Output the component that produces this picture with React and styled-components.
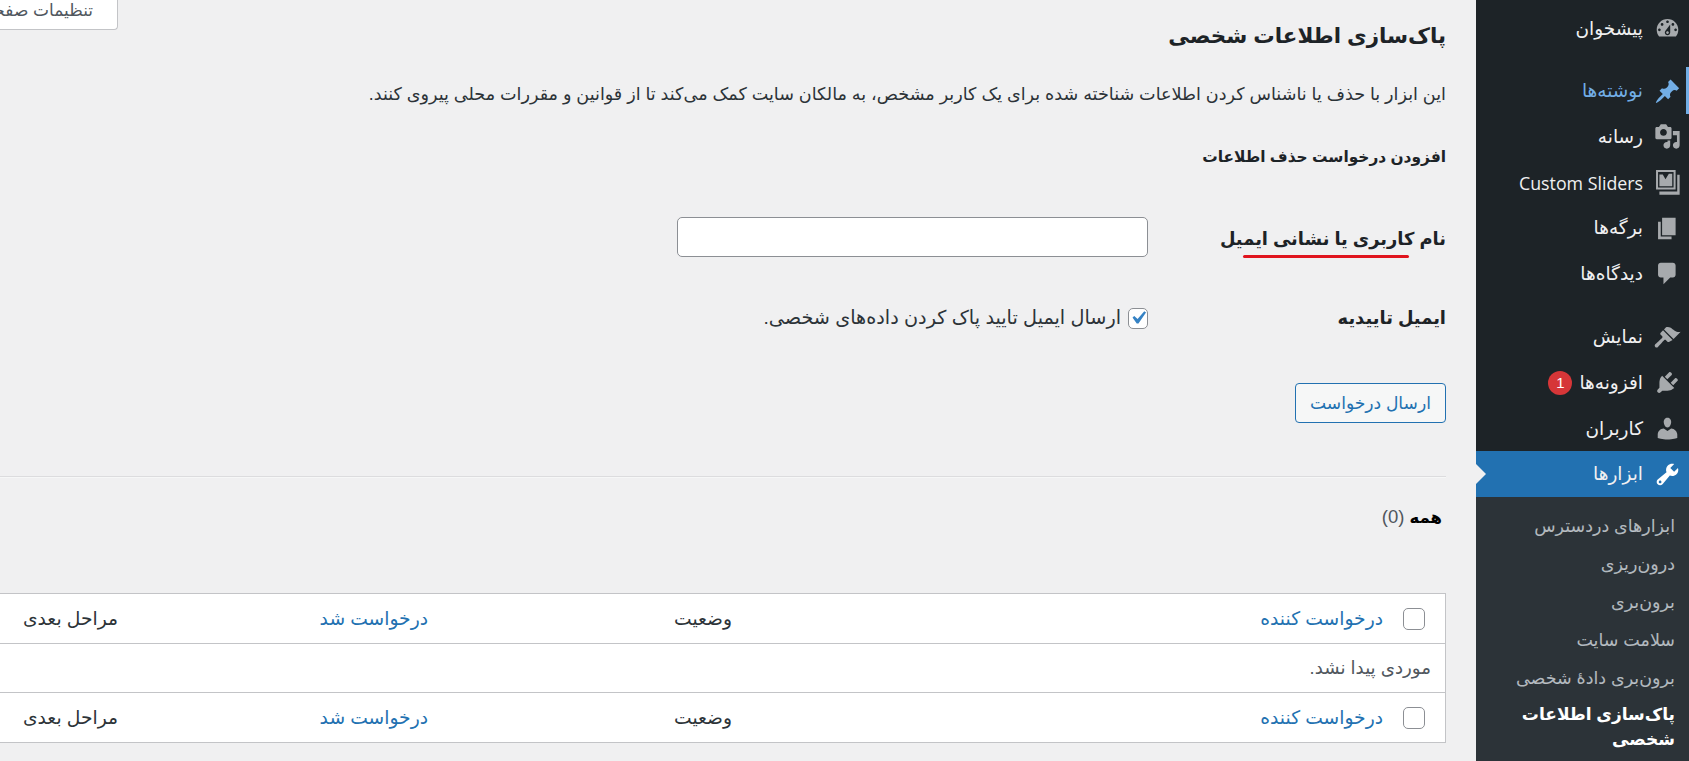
import React from "react";
import styled, { createGlobalStyle } from "styled-components";

const Global = createGlobalStyle`
  html, body { margin: 0; padding: 0; height: 100%; overflow: hidden; background: #f0f0f1; }
  body { font-family: "Liberation Sans", "DejaVu Sans", sans-serif; color: #2c3338; }
  #root { height: 100%; }
`;

const Page = styled.div`
  display: flex;
  direction: rtl;
  width: 1689px;
  height: 761px;
  overflow: hidden;
`;
const Sidebar = styled.nav`
  flex: 0 0 213px;
  background: #1d2327;
  padding-top: 6px;
  box-sizing: border-box;
  height: 761px;
`;
const MenuGroup = styled.ul`
  list-style: none;
  margin: 0 0 ${(p) => p.$gap || 0}px;
  padding: 0;
`;
const MenuItem = styled.li`
  position: relative;
  display: flex;
  align-items: center;
  gap: 11px;
  height: 45.6px;
  box-sizing: border-box;
  padding-right: 8px;
  font-size: 18.5px;
  color: ${(p) => (p.$current ? "#72aee6" : "#f0f0f1")};
  background: ${(p) => (p.$active ? "#2271b1" : "transparent")};
  svg { flex: 0 0 27px; fill: ${(p) => (p.$current ? "#72aee6" : p.$active ? "#fff" : "#a7aaad")}; }
`;
const CurrentBar = styled.span`
  position: absolute;
  right: 0;
  top: -2px;
  width: 3px;
  height: 47px;
  background: #72aee6;
`;
const LatinLabel = styled.span`
  font-family: "Open Sans", sans-serif;
  font-size: 17.8px;
`;
const Arrow = styled.span`
  position: absolute;
  left: 0;
  top: 13px;
  border-style: solid;
  border-width: 10px 0 10px 10px;
  border-color: transparent transparent transparent #f0f0f1;
`;
const Badge = styled.span`
  width: 24px;
  height: 24px;
  border-radius: 50%;
  background: #d63638;
  color: #fff;
  font-size: 15px;
  display: flex;
  align-items: center;
  justify-content: center;
  margin-right: -4px;
`;
const SubMenu = styled.ul`
  list-style: none;
  margin: 0;
  padding: 10px 14px 0 0;
  background: #2c3338;
  height: 264px;
  box-sizing: border-box;
`;
const SubItem = styled.li`
  min-height: 38px;
  line-height: ${(p) => (p.$current ? "25px" : "38px")};
  padding-top: ${(p) => (p.$current ? 5 : 0)}px;
  font-size: ${(p) => (p.$current ? 17 : 17.5)}px;
  font-weight: ${(p) => (p.$current ? 700 : 400)};
  color: ${(p) => (p.$current ? "#fff" : "rgba(240,246,252,.7)")};
  padding-left: 30px;
`;

const Main = styled.main`
  flex: 1 1 auto;
  min-width: 0;
  overflow: hidden;
  padding-right: 30px;
`;
const Inner = styled.div`
  width: 1486px;
`;
const Head = styled.header`
  display: flex;
  justify-content: space-between;
  align-items: center;
  height: 70px;
`;
const Title = styled.h1`
  margin: 2px 0 0;
  font-size: 21.4px;
  font-weight: 700;
  color: #1d2327;
`;
const ScreenButton = styled.button`
  align-self: flex-start;
  direction: rtl;
  width: 158px;
  height: 30px;
  padding: 0 24px 8px 0;
  text-align: right;
  font: inherit;
  font-size: 17px;
  color: #50575e;
  background: #fff;
  border: 1px solid #c3c4c7;
  border-top: 0;
  border-radius: 0 0 4px 4px;
  overflow: hidden;
  white-space: nowrap;
`;
const Intro = styled.p`
  margin: 12px 0 0;
  font-size: 17.6px;
  line-height: 24px;
  color: #2c3338;
`;
const SubTitle = styled.h2`
  margin: 39px 0 0;
  font-size: 15.4px;
  line-height: 24px;
  font-weight: 700;
  color: #1d2327;
`;
const FormRow = styled.div`
  display: grid;
  grid-template-columns: 298px 471px;
  align-items: center;
  margin-top: ${(p) => p.$top}px;
`;
const Label = styled.label`
  position: relative;
  padding-top: ${(p) => p.$nudge || 0}px;
  font-size: 17.9px;
  font-weight: 700;
  color: #1d2327;
  line-height: 24px;
`;
const RedLine = styled.span`
  position: absolute;
  right: 37px;
  width: 166px;
  top: 32px;
  height: 3px;
  background: #e0141e;
  border-radius: 2px;
`;
const TextInput = styled.input`
  width: 471px;
  height: 40px;
  box-sizing: border-box;
  background: #fff;
  border: 1px solid #8c8f94;
  border-radius: 5px;
`;
const CheckRow = styled.div`
  display: flex;
  align-items: center;
  gap: 7px;
  font-size: 19.2px;
  line-height: 24px;
  color: #2c3338;
`;
const CheckBox = styled.span`
  flex: 0 0 20px;
  width: 20px;
  height: 21px;
  box-sizing: border-box;
  display: flex;
  align-items: center;
  justify-content: center;
  background: #fff;
  border: 1px solid #8c8f94;
  border-radius: 5px;
  svg { flex: 0 0 auto; fill: #3582c4; }
`;
const Submit = styled.button`
  display: block;
  margin-top: 53px;
  width: 151px;
  height: 40px;
  font: inherit;
  font-size: 17.1px;
  color: #2271b1;
  background: #f6f7f7;
  border: 1px solid #2271b1;
  border-radius: 4px;
`;
const Rule = styled.hr`
  margin: 53px 0 0;
  border: 0;
  border-top: 1px solid #dcdcde;
  border-bottom: 1px solid #f6f7f7;
`;
const Filter = styled.div`
  margin: 27px 4px 0 0;
  line-height: 24px;
  font-size: 18.5px;
  color: #50575e;
  b { color: #000; font-size: 16.5px; }
`;
const Table = styled.table`
  width: 100%;
  margin-top: 64px;
  table-layout: fixed;
  border-collapse: separate;
  border-spacing: 0;
  background: #fff;
  border: 1px solid #c3c4c7;
  font-size: 18.7px;
  color: #2c3338;
`;
const Th = styled.th`
  font-weight: 400;
  text-align: right;
  padding: 0 13px 0 0;
  height: 49px;
  color: ${(p) => (p.$link ? "#2271b1" : "#2c3338")};
  ${(p) => p.$bottom && "border-bottom: 1px solid #c3c4c7;"}
  ${(p) => p.$topline && "border-top: 1px solid #c3c4c7;"}
`;
const CheckTh = styled(Th)`
  padding: 0 20px 0 0;
`;
const EmptyBox = styled.span`
  display: block;
  width: 22px;
  height: 22px;
  box-sizing: border-box;
  background: #fff;
  border: 1px solid #8c8f94;
  border-radius: 5px;
`;
const EmptyCell = styled.td`
  height: 48px;
  padding: 0 14px 0 0;
  font-size: 18.2px;
  color: #50575e;
`;

const Icon = ({ d, size = 27, rule = "nonzero" }) => (
  <svg width={size} height={size} viewBox="0 0 20 20" aria-hidden="true"><path d={d} fillRule={rule} /></svg>
);

const I = {
  dash: "M3.76 16h12.48c1.1-1.37 1.76-3.11 1.76-5 0-4.42-3.58-8-8-8s-8 3.58-8 8c0 1.89.66 3.63 1.76 5zM10 4c.55 0 1 .45 1 1s-.45 1-1 1-1-.45-1-1 .45-1 1-1zM6 6c.55 0 1 .45 1 1s-.45 1-1 1-1-.45-1-1 .45-1 1-1zm8 0c.55 0 1 .45 1 1s-.45 1-1 1-1-.45-1-1 .45-1 1-1zm-5.37 5.55L12 7v6c0 1.1-.9 2-2 2s-2-.9-2-2c0-.57.24-1.08.63-1.45zM4 10c.55 0 1 .45 1 1s-.45 1-1 1-1-.45-1-1 .45-1 1-1zm12 0c.55 0 1 .45 1 1s-.45 1-1 1-1-.45-1-1 .45-1 1-1zm-5 3c0-.55-.45-1-1-1s-1 .45-1 1 .45 1 1 1 1-.45 1-1z",
  post: "M10.44 3.02l1.82-1.82 6.36 6.35-1.83 1.82c-1.05-.68-2.48-.57-3.41.36l-.75.75c-.92.93-1.04 2.35-.35 3.41l-1.83 1.82-2.41-2.41-2.8 2.79c-.42.42-3.38 2.71-3.8 2.29s1.86-3.39 2.28-3.81l2.79-2.79L4.1 9.36l1.83-1.82c1.05.69 2.48.57 3.4-.36l.75-.75c.93-.92 1.05-2.35.36-3.41z",
  media: "M13 11V4c0-.55-.45-1-1-1h-1.67L9 1H5L3.67 3H2c-.55 0-1 .45-1 1v7c0 .55.45 1 1 1h10c.55 0 1-.45 1-1zM7 4.5c1.38 0 2.5 1.12 2.5 2.5S8.38 9.5 7 9.5 4.5 8.38 4.5 7 5.62 4.5 7 4.5zM14 6h5v10.5c0 1.38-1.12 2.5-2.5 2.5S14 17.88 14 16.5s1.12-2.5 2.5-2.5c.17 0 .34.02.5.05V9h-3V6zm-4 8.05V13h2v3.5c0 1.38-1.12 2.5-2.5 2.5S7 17.88 7 16.5 8.12 14 9.5 14c.17 0 .34.02.5.05z",
  slides: "M1.5.7H16v14.5H1.5zM3 2.2v11.5h11.5V2.2zM4 12.7V4h2.5L8.5 7.5 11 3.5h2.5v9.2zM17.2 4.2H19V19H4v-2.4h13.2z",
  page: "M6 15V2h10v13H6zm-1 1h8v2H3V5h2v11z",
  comment: "M5 2h9c1.1 0 2 .9 2 2v7c0 1.1-.9 2-2 2h-2l-5 5v-5H5c-1.1 0-2-.9-2-2V4c0-1.1.9-2 2-2z",
  brush: "M14.48 11.06L7.41 3.99l1.5-1.5c.5-.56 2.3-.47 3.51.32 1.21.8 1.43 1.28 2.91 2.1 1.18.64 2.45 1.26 4.45.85zm-.71.71L6.7 4.7 4.93 6.47c-.39.39-.39 1.02 0 1.41l1.06 1.06c.39.39.39 1.03 0 1.42-.6.6-5.06 4.62-5.06 4.62-.55.55-.55 1.45 0 2 .56.56 1.45.56 2 0 0 0 3.99-4.38 4.56-4.95.39-.39 1.04-.4 1.42-.01l1.06 1.06c.39.39 1.02.39 1.41 0z",
  plug: "M13.11 4.36L9.87 7.6 8 5.73l3.24-3.24c.35-.34 1.05-.2 1.56.32.52.51.66 1.21.31 1.55zm-8 1.77l.91-1.12 9.01 9.01-1.19.84c-.71.71-2.63 1.16-3.82 1.16H6.14L4.9 17.26c-.59.59-1.54.59-2.12 0-.59-.58-.59-1.53 0-2.12l1.24-1.24v-3.88c0-1.13.4-3.19 1.09-3.89zm7.26 3.97l3.24-3.24c.34-.35 1.04-.21 1.55.31.52.51.66 1.21.31 1.55l-3.24 3.25z",
  user: "M10 9.25c-2.27 0-2.73-3.44-2.73-3.44C7 4.02 7.82 2 9.97 2c2.16 0 2.98 2.02 2.71 3.81 0 0-.41 3.44-2.68 3.44zm0 2.57L12.72 10c2.39 0 4.52 2.33 4.52 4.53v2.49s-3.65 1.13-7.24 1.13c-3.65 0-7.24-1.13-7.24-1.13v-2.49c0-2.25 1.94-4.48 4.47-4.48z",
  tool: "M16.68 9.77c-1.34 1.34-3.3 1.67-4.95.99l-5.41 6.52c-.99.99-2.59.99-3.58 0s-.99-2.59 0-3.57l6.52-5.42c-.68-1.65-.35-3.61.99-4.95 1.28-1.28 3.12-1.62 4.72-1.06l-2.89 2.89 2.82 2.82 2.86-2.87c.53 1.58.18 3.39-1.08 4.65zM3.81 16.21c.4.39 1.04.39 1.43 0 .4-.4.4-1.04 0-1.43-.39-.4-1.03-.4-1.43 0-.39.39-.39 1.03 0 1.43z",
};

const Columns = () => (
  <colgroup>
    <col style={{ width: 49 }} />
    <col style={{ width: 651 }} />
    <col style={{ width: 304 }} />
    <col style={{ width: 310 }} />
    <col />
  </colgroup>
);

const HeaderCells = ({ bottom, topline }) => (
  <tr>
    <CheckTh $bottom={bottom} $topline={topline}><EmptyBox /></CheckTh>
    <Th $link $bottom={bottom} $topline={topline}>درخواست کننده</Th>
    <Th $bottom={bottom} $topline={topline}>وضعیت</Th>
    <Th $link $bottom={bottom} $topline={topline}>درخواست شد</Th>
    <Th $bottom={bottom} $topline={topline}>مراحل بعدی</Th>
  </tr>
);

export default function App() {
  return (
    <Page dir="rtl">
      <Global />
      <Sidebar>
        <MenuGroup $gap={17}>
          <MenuItem><Icon d={I.dash} />پیشخوان</MenuItem>
        </MenuGroup>
        <MenuGroup $gap={18}>
          <MenuItem $current><CurrentBar /><Icon d={I.post} />نوشته‌ها</MenuItem>
          <MenuItem><Icon d={I.media} />رسانه</MenuItem>
          <MenuItem><Icon d={I.slides} rule="evenodd" /><LatinLabel>Custom Sliders</LatinLabel></MenuItem>
          <MenuItem><Icon d={I.page} />برگه‌ها</MenuItem>
          <MenuItem><Icon d={I.comment} />دیدگاه‌ها</MenuItem>
        </MenuGroup>
        <MenuGroup>
          <MenuItem><Icon d={I.brush} />نمایش</MenuItem>
          <MenuItem><Icon d={I.plug} />افزونه‌ها<Badge>1</Badge></MenuItem>
          <MenuItem><Icon d={I.user} />کاربران</MenuItem>
          <MenuItem $active><Icon d={I.tool} />ابزارها<Arrow /></MenuItem>
        </MenuGroup>
        <SubMenu>
          <SubItem>ابزارهای دردسترس</SubItem>
          <SubItem>درون‌ریزی</SubItem>
          <SubItem>برون‌بری</SubItem>
          <SubItem>سلامت سایت</SubItem>
          <SubItem>برون‌بری دادهٔ شخصی</SubItem>
          <SubItem $current>پاک‌سازی اطلاعات شخصی</SubItem>
        </SubMenu>
      </Sidebar>
      <Main>
        <Inner>
          <Head>
            <Title>پاک‌سازی اطلاعات شخصی</Title>
            <ScreenButton>تنظیمات صفحه</ScreenButton>
          </Head>
          <Intro>این ابزار با حذف یا ناشناس کردن اطلاعات شناخته شده برای یک کاربر مشخص، به مالکان سایت کمک می‌کند تا از قوانین و مقررات محلی پیروی کنند.</Intro>
          <SubTitle>افزودن درخواست حذف اطلاعات</SubTitle>
          <FormRow $top={48}>
            <Label $nudge={4}>نام کاربری یا نشانی ایمیل<RedLine /></Label>
            <TextInput type="text" />
          </FormRow>
          <FormRow $top={49}>
            <Label>ایمیل تاییدیه</Label>
            <CheckRow>
              <CheckBox>
                <svg width="26" height="26" viewBox="0 0 20 20"><path d="M14.83 4.89l1.34.94-5.81 8.38H9.02L5.78 9.67l1.34-1.25 2.57 2.4z" /></svg>
              </CheckBox>
              ارسال ایمیل تایید پاک کردن داده‌های شخصی.
            </CheckRow>
          </FormRow>
          <Submit>ارسال درخواست</Submit>
          <Rule />
          <Filter><b>همه</b> (0)</Filter>
          <Table>
            <Columns />
            <thead><HeaderCells bottom /></thead>
            <tbody>
              <tr><EmptyCell colSpan={5}>موردی پیدا نشد.</EmptyCell></tr>
            </tbody>
            <tfoot><HeaderCells topline /></tfoot>
          </Table>
        </Inner>
      </Main>
    </Page>
  );
}
